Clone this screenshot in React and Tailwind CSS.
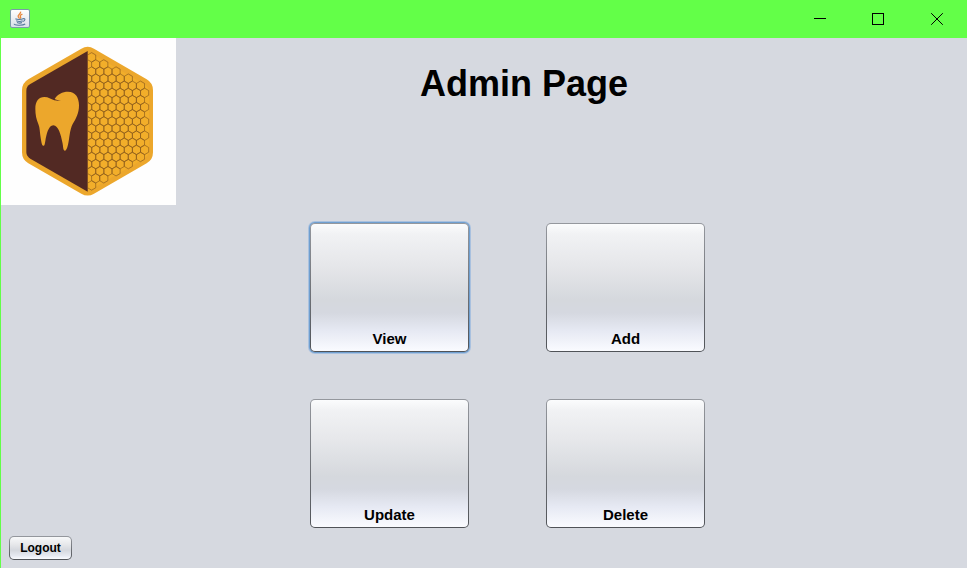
import React from "react";

const HEX_ROWS = [
  [275, 1], [287, 2], [275, 4], [263, 6], [275, 7], [263, 8], [275, 7],
  [263, 8], [275, 7], [263, 8], [275, 7], [263, 8], [275, 7], [263, 8],
  [275, 7], [263, 6], [275, 4], [287, 2], [275, 1],
];

const honeycomb = HEX_ROWS.flatMap(([start, count], row) =>
  Array.from({ length: count }, (_, i) => {
    const x = start + i * 24.4;
    const y = 58 + row * 21.35;
    return `M${x} ${y - 14.2}l12.2 7.1v14.2l-12.2 7.1l-12.2 -7.1v-14.2z`;
  })
).join("");

function Logo() {
  return (
    <svg viewBox="3 0 525 501" className="h-[167px] w-[175px] bg-[#fefefe]" role="img" aria-label="Dental clinic logo">
      <defs>
        <clipPath id="right-half">
          <rect x="263" y="0" width="200" height="501" />
        </clipPath>
      </defs>
      <path
        d="M244 32Q263 21 282 32L440 124Q459 135 459 157V343Q459 365 440 376L282 467Q263 478 244 467L85 376Q66 365 66 343V157Q66 135 85 124Z"
        fill="#eca72c"
      />
      <path
        d="M263 44L281 50L432 138Q447 147 447 160V340Q447 353 432 362L281 450L263 458Z"
        fill="#f2ae2a"
      />
      <path d="M263 39V461L91 362Q79 355 79 342V158Q79 145 91 138Z" fill="#522923" />
      <path d={honeycomb} clipPath="url(#right-half)" fill="none" stroke="#8a5a1c" strokeWidth="2" />
      <path
        d="M106 212C106 190 116 177 133 177C146 177 152 183 163 187C171 189 177 189 183 187C174 187 168 185 164 183C171 169 188 161 204 161C226 161 237 178 237 202C237 226 228 242 218 258C208 278 209 301 204 320C201 332 198 338 194 338C189 337 190 326 187 313C183 291 175 262 160 262C145 262 139 291 136 309C134 321 133 324 130 323C125 322 124 310 122 299C119 282 120 270 115 258C109 244 106 230 106 212Z"
        fill="#eca72c"
      />
    </svg>
  );
}

function JavaIcon() {
  return (
    <svg viewBox="0 0 20 20" className="h-5 w-5" aria-hidden="true">
      <defs>
        <linearGradient id="java-tile" x1="0" y1="0" x2="0" y2="1">
          <stop offset="0" stopColor="#ffffff" />
          <stop offset="1" stopColor="#d9dfe7" />
        </linearGradient>
      </defs>
      <rect x="0.5" y="0.5" width="19" height="18" rx="1.5" fill="url(#java-tile)" stroke="#7a9aa8" />
      <path d="M10.6 2.6C11.4 4.8 7.2 5.6 8.2 7.8C8.5 8.6 9.3 9 9.6 9.6M12.4 5.2C10.4 6 9.6 6.8 10.6 8C11 8.6 10.6 9.2 10.2 9.6" fill="none" stroke="#e8873c" strokeWidth="1.3" />
      <path d="M5.4 9.8C7 10.8 11.4 10.8 13 9.8M6.2 11.8C8 12.6 11 12.6 12.6 11.8M7 13.6C8.6 14.2 10.8 14.2 12 13.6M13 9.8C15.6 8.8 15.6 11.6 12.8 12.6M4.4 14.8C3.2 16.4 12.8 16.8 15.2 15" fill="none" stroke="#56799c" strokeWidth="1.1" />
    </svg>
  );
}

function MenuButton({ children, autoFocus }) {
  return (
    <button
      type="button"
      autoFocus={autoFocus}
      className="flex h-[129px] w-[159px] items-end justify-center rounded-[5px] border border-transparent pb-1 text-[15px] leading-4 font-bold outline-none [background:linear-gradient(#fbfcfd_0%,#f1f2f4_8%,#e6e7ea_32%,#d5d8dd_60%,#d5d8e0_70%,#e6e9f3_84%,#fafbff_100%)_padding-box,linear-gradient(#95989e,#505358)_border-box] focus:shadow-[0_0_0_1px_#6f9fd0,0_0_0_2px_#a9c1df]"
    >
      {children}
    </button>
  );
}

export default function App() {
  return (
    <div className="flex min-h-screen flex-col bg-[#d6d9e0] font-['Liberation_Sans',Arial,sans-serif] text-black">
      <header className="flex h-[38px] items-center justify-between bg-[#63ff48] pl-[10px]">
        <JavaIcon />
        <div className="flex h-full">
          <button type="button" aria-label="Minimize" className="flex w-[58px] items-center justify-center">
            <svg viewBox="0 0 12 12" className="h-3 w-3" shapeRendering="crispEdges">
              <path d="M0 5h12v1H0z" />
            </svg>
          </button>
          <button type="button" aria-label="Maximize" className="flex w-[58px] items-center justify-center">
            <svg viewBox="0 0 12 12" className="h-3 w-3" fill="none" stroke="black" shapeRendering="crispEdges">
              <rect x="0.5" y="0.5" width="11" height="11" />
            </svg>
          </button>
          <button type="button" aria-label="Close" className="flex w-[60px] items-center justify-center">
            <svg viewBox="0 0 12 12" className="h-3 w-3" fill="none" stroke="black">
              <path d="M0.2 0.2L11.8 11.8M11.8 0.2L0.2 11.8" />
            </svg>
          </button>
        </div>
      </header>
      <div className="flex flex-1 border-l border-[#63ff48]">
        <aside className="flex flex-col items-start justify-between">
          <Logo />
          <button
            type="button"
            className="mb-2 ml-2 h-6 w-[63px] rounded-[5px] border border-transparent text-xs font-bold [background:linear-gradient(#f8f9fa_0%,#e6e7ea_35%,#d5d8de_60%,#e6e9f1_85%,#fafbff_100%)_padding-box,linear-gradient(#95989e,#505358)_border-box]"
          >
            Logout
          </button>
        </aside>
        <main className="flex-1">
          <h1 className="pt-[26px] pr-[95px] text-center text-4xl font-bold">Admin Page</h1>
          <div className="grid grid-cols-[auto_auto] justify-center gap-x-[77px] gap-y-[47px] pt-[119px] pr-32">
            <MenuButton autoFocus>View</MenuButton>
            <MenuButton>Add</MenuButton>
            <MenuButton>Update</MenuButton>
            <MenuButton>Delete</MenuButton>
          </div>
        </main>
      </div>
    </div>
  );
}
